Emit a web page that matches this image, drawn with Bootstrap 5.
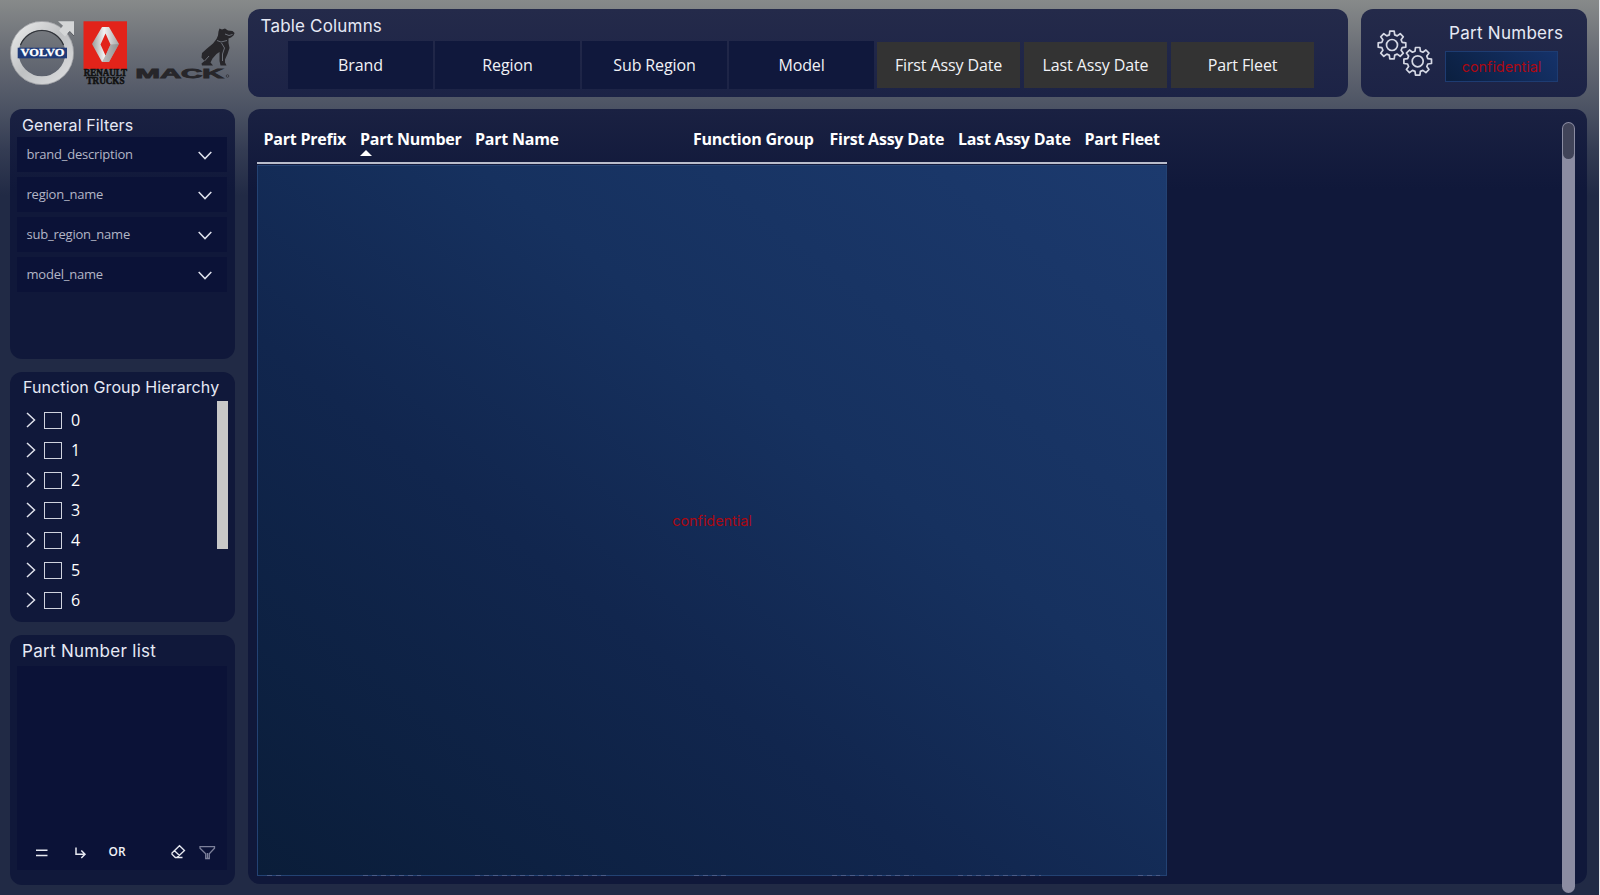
<!DOCTYPE html>
<html lang="en">
<head>
<meta charset="utf-8">
<title>Part Numbers</title>
<link href="https://cdn.jsdelivr.net/npm/bootstrap@5.3.0/dist/css/bootstrap.min.css" rel="stylesheet">
<style>
html,body{height:895px;overflow:hidden}
body{background:linear-gradient(180deg,#878a8a 0,#6a6e76 50px,#4b5263 110px,#343c53 150px,#212a45 195px,#212a45 100%);color:#fff;font-family:"Open Sans","Noto Sans",sans-serif;border-right:1px solid #e4e6ea}
.shell{width:1587px;height:885px;padding:9px 0 0 10px;display:grid;grid-template-columns:225px 1339px;column-gap:13px}
.left-col{display:grid;grid-template-rows:87px 250px 250px 250px;row-gap:13px}
.left-col .logos{height:87px}
.right-col{display:grid;grid-template-rows:88px 775px;row-gap:12px}
.top-row{display:grid;grid-template-columns:1100px 226px;column-gap:13px}
.pane{border-radius:12px;background:#10183a}
.pane-top{background:linear-gradient(#242a4a,#1c2346)}
.pane-fade{background:linear-gradient(#1a2142 0,#10183a 80px)}
.ttl{font-family:Inter,sans-serif;font-size:16px;line-height:20px;letter-spacing:.1px;color:#e6e9f5;white-space:nowrap}
.ttl-filters{padding:6px 0 2px 12px}
.ttl-tree{padding:5px 0 4px 13px}
.ttl-list{padding:6px 0 5px 12px;font-size:17px;letter-spacing:.3px}
.ttl-cols{padding:7px 0 5px 12.5px;font-size:17px;letter-spacing:.18px}
.ttl-count{padding:14px 0 8px 4px;font-size:17px;letter-spacing:.28px}
.tiles{margin-left:40px;display:grid;grid-template-columns:repeat(7,145px);column-gap:2px;height:48px}
.tile{background:#10183c;border-radius:0;color:#f1f2f6;font-size:16px;letter-spacing:-.12px;line-height:46px;padding:0;border:0}
.tile-off{background:#333;margin:1px;line-height:45px}
.secret{background:linear-gradient(45deg,#0b1f3f,#15326a);border:1px solid #1e3c72;color:#ab0812;font-family:Inter,sans-serif;font-size:14.5px;letter-spacing:-.05px}
.secret-box{width:113px;height:31px;line-height:30px}
.slot{background:#0b1237;height:35px;margin:0 8px 5px 7px;padding:0 15px 0 9.5px;font-size:13px;letter-spacing:-.22px;color:#b3b6c6}
.slot svg{margin-top:2px}
.tree{padding:4px 0 0 16px}
.tree-row{height:30px;font-size:16px;line-height:30px}
.box{width:18px;height:17px;border:1.5px solid #cfd2de;margin:0 9px 0 8px}
.bar{width:11px;height:148px;background:#c8c8c8;margin-right:7px}
.listbox{background:#0b1237;margin:0 8px 0 7px;height:204px}
.grid-cols{display:grid;grid-template-columns:96.5px 115px 218px 136.5px 128.5px 126.5px 89px;width:910px;white-space:nowrap}
.grid-head{height:54px;padding:18px 0 0 6.5px;font-size:16px;letter-spacing:-.23px;font-weight:700;line-height:22px;border-bottom:2px solid #b9bdcb}
.tri{width:0;height:0;border:6px solid transparent;border-top:0;border-bottom-color:#fff}
.cover{width:910px;height:711px;margin-top:1px;background:linear-gradient(38deg,#0a1d39 0,#11264e 38%,#16315f 62%,#1c3a6e 100%);border:1px solid #234273;color:#ab0812;font-family:Inter,sans-serif;font-size:14.5px;letter-spacing:-.05px}
.peek{display:block;margin-top:-1px}
.sheet{padding:1px 0 0 9px}
.track{left:1314px;top:13px;width:13px;height:771px;border-radius:7px;background:#8b8ca2}
.thumb{margin:1px;height:36px;border-radius:6px;background:#414459}
</style>
</head>
<body>
<div class="shell">
  <div class="left-col">
    <svg class="logos" width="225" height="87" viewBox="10 9 225 87" role="img" aria-label="Volvo, Renault Trucks, Mack">
      <defs><linearGradient id="ag" x1="0" y1="0" x2="1" y2="1"><stop offset="0" stop-color="#e8e9e9"/><stop offset=".5" stop-color="#bfc1c3"/><stop offset="1" stop-color="#dcdddf"/></linearGradient>
      <linearGradient id="dg" x1="0" x2="1"><stop offset="0" stop-color="#9a9a9a"/><stop offset=".45" stop-color="#f2f2f2"/><stop offset="1" stop-color="#a5a5a5"/></linearGradient></defs>
      <circle cx="42" cy="53" r="27.500" fill="none" stroke="url(#ag)" stroke-width="8.500"/>
      <circle cx="42" cy="53" r="31.600" fill="none" stroke="#8e9195" stroke-width=".6"/>
      <path d="M20.500 45A23.200 23.200 0 0 1 63.500 45" fill="none" stroke="#2f3238" stroke-width="1.200"/>
      <path d="M58 21.300H74V36L69.500 31.500L65 36.500L59 30.500L63 25.700Z" fill="#d4d6d7"/>
      <path d="M68 33.500L69.800 31.500L74 36" fill="none" stroke="#55585e" stroke-width="1"/>
      <rect x="17.700" y="47.700" width="49.300" height="10.600" fill="#1f3a78"/>
      <text x="20.500" y="56.200" font-family="Liberation Serif,serif" font-weight="700" font-size="10" fill="#fff" stroke="#fff" stroke-width=".3" textLength="44" lengthAdjust="spacingAndGlyphs">VOLVO</text>
      <rect x="83.500" y="21.300" width="43.500" height="47.700" fill="#e2231a"/>
      <path fill-rule="evenodd" d="M102 27H109L119 44L109 62H102L92 44ZM105.500 33.500L100.500 44.500L105.500 55.500L110.500 44.500Z" fill="url(#dg)"/>
      <path d="M102 62L105.500 55.500L110.500 44.500L119 44L109 62Z" fill="#777" opacity=".45"/>
      <text x="83.800" y="76.200" font-family="Liberation Serif,serif" font-weight="700" font-size="9.500" fill="#111" stroke="#111" stroke-width=".5" textLength="43.200" lengthAdjust="spacingAndGlyphs">RENAULT</text>
      <text x="86.500" y="83.800" font-family="Liberation Serif,serif" font-weight="700" font-size="9.500" fill="#111" stroke="#111" stroke-width=".5" textLength="38" lengthAdjust="spacingAndGlyphs">TRUCKS</text>
      <text x="135.500" y="77.600" font-family="Liberation Sans,sans-serif" font-weight="700" font-size="12.600" fill="#27262a" stroke="#27262a" stroke-width=".8" textLength="88" lengthAdjust="spacingAndGlyphs">MACK</text>
      <circle cx="227.500" cy="76" r="1.300" fill="none" stroke="#27262a" stroke-width=".6"/>
      <path d="M218.500 31.500L219.500 28.500L222 29.500L225 28.500L228 30.500L232.500 31L234.600 33L233.500 35.500L231 37.500L228.500 38.500L228.500 43L229.500 48L227.500 54L225 59.500V62.500L226.500 65.500H220.500L219.500 61L219.500 52L216.500 54L212.500 58.500L210.500 62.500L213 65.500H202L201.500 63.500L204.500 61L201.500 57.500L202 53L207 48.500L213 43.500L216.500 39L218 35.500Z" fill="#27262a"/>
      <path d="M225 34L229 35.500L232.500 34.500M217 40.500L221 42L227 40.500M221.500 43L224.500 48L222.500 54V61M204.500 61L209 56" fill="none" stroke="#737780" stroke-width=".9"/>
    </svg>
    <section class="pane pane-fade">
      <div class="ttl ttl-filters">General Filters</div>
      <div class="slot d-flex justify-content-between align-items-center"><span>brand_description</span><svg width="14" height="9" viewBox="0 0 14 9"><path d="M.700 1L7 7.600L13.300 1" fill="none" stroke="#dfe1ec" stroke-width="1.500"/></svg></div>
      <div class="slot d-flex justify-content-between align-items-center"><span>region_name</span><svg width="14" height="9" viewBox="0 0 14 9"><path d="M.700 1L7 7.600L13.300 1" fill="none" stroke="#dfe1ec" stroke-width="1.500"/></svg></div>
      <div class="slot d-flex justify-content-between align-items-center"><span>sub_region_name</span><svg width="14" height="9" viewBox="0 0 14 9"><path d="M.700 1L7 7.600L13.300 1" fill="none" stroke="#dfe1ec" stroke-width="1.500"/></svg></div>
      <div class="slot d-flex justify-content-between align-items-center"><span>model_name</span><svg width="14" height="9" viewBox="0 0 14 9"><path d="M.700 1L7 7.600L13.300 1" fill="none" stroke="#dfe1ec" stroke-width="1.500"/></svg></div>
    </section>
    <section class="pane">
      <div class="ttl ttl-tree">Function Group Hierarchy</div>
      <div class="d-flex justify-content-between">
        <div id="tree" class="tree"></div>
        <div class="bar"></div>
      </div>
    </section>
    <section class="pane">
      <div class="ttl ttl-list">Part Number list</div>
      <div class="listbox d-flex align-items-end">
        <svg width="210" height="34" viewBox="17 836 210 34" fill="none" stroke="#e6e8f0" stroke-width="1.500">
          <path d="M36 850.300H47.500M36 855.500H47.500"/>
          <path d="M76 847.500V854.300H84.500M81.300 850.500L85 854.300L81.300 858"/>
          <text x="108.500" y="856" font-size="12" font-weight="600" fill="#f2f3f8" stroke="none" textLength="17" lengthAdjust="spacingAndGlyphs">OR</text>
          <path stroke-width="1.300" d="M172 853L179.500 845.700L184.500 850.500L177 857.500H175.300L172 854.200ZM174.500 850.700L179.500 855.500M177 857.500H182.500"/>
          <path stroke="#7d819b" stroke-width="1.300" d="M200 846.600H214.500V848.300L209.300 853.800V858.500H205.700V853.800L200 848.300ZM207.500 853V858"/>
        </svg>
      </div>
    </section>
  </div>
  <div class="right-col">
    <div class="top-row">
      <section class="pane pane-top">
        <div class="ttl ttl-cols">Table Columns</div>
        <div class="tiles">
          <button class="btn tile">Brand</button><button class="btn tile">Region</button><button class="btn tile">Sub Region</button><button class="btn tile">Model</button>
          <button class="btn tile tile-off">First Assy Date</button><button class="btn tile tile-off">Last Assy Date</button><button class="btn tile tile-off">Part Fleet</button>
        </div>
      </section>
      <section class="pane pane-top d-flex">
        <svg width="84" height="88" viewBox="1361 9 84 88" fill="none" stroke="#d5d8e4" stroke-width="1.700" stroke-linejoin="round">
          <defs><g id="gear"><path d="M-2.700-10.100L-2.200-13.800H2.200L2.700-10.100L5.200-9.100L8.200-11.300L11.300-8.200L9.100-5.200L10.100-2.700L13.800-2.200V2.200L10.100 2.700L9.100 5.200L11.300 8.200L8.200 11.300L5.200 9.100L2.700 10.100L2.200 13.800H-2.200L-2.700 10.100L-5.200 9.100L-8.200 11.300L-11.300 8.200L-9.100 5.200L-10.100 2.700L-13.800 2.200V-2.200L-10.100-2.700L-9.100-5.200L-11.300-8.200L-8.200-11.300L-5.200-9.100Z"/><circle r="5.500"/></g></defs>
          <use href="#gear" x="1392" y="45"/><use href="#gear" x="1417.700" y="61.300"/>
        </svg>
        <div><div class="ttl ttl-count">Part Numbers</div>
        <div class="secret secret-box text-center">confidential</div></div>
      </section>
    </div>
    <section class="pane pane-fade position-relative">
      <div class="sheet">
      <div class="grid-cols grid-head">
        <div>Part Prefix</div><div>Part Number<div class="tri"></div></div><div>Part Name</div><div>Function Group</div><div>First Assy Date</div><div>Last Assy Date</div><div>Part Fleet</div>
      </div>
      <div class="cover d-flex align-items-center justify-content-center">confidential</div>
      <svg class="peek" width="910" height="1" viewBox="257 0 910 1" stroke="#4a5c88" stroke-width="2" stroke-dasharray="5 4"><path d="M267 .5H284M363 .5H421M475 .5H606M694 .5H728M832 .5H914M958 .5H1041M1138 .5H1160"/></svg>
      </div>
      <div class="track position-absolute"><div class="thumb"></div></div>
    </section>
  </div>
</div>
<script src="https://cdn.jsdelivr.net/npm/bootstrap@5.3.0/dist/js/bootstrap.bundle.min.js"></script>
<script>
document.getElementById('tree').innerHTML=[0,1,2,3,4,5,6].map(n=>`<div class="tree-row d-flex align-items-center"><svg width="10" height="16" viewBox="0 0 10 16"><path d="M1 1L8.500 8L1 15" fill="none" stroke="#e0e2ec" stroke-width="1.500"/></svg><span class="box"></span><span>${n}</span></div>`).join('');
</script>
</body>
</html>
